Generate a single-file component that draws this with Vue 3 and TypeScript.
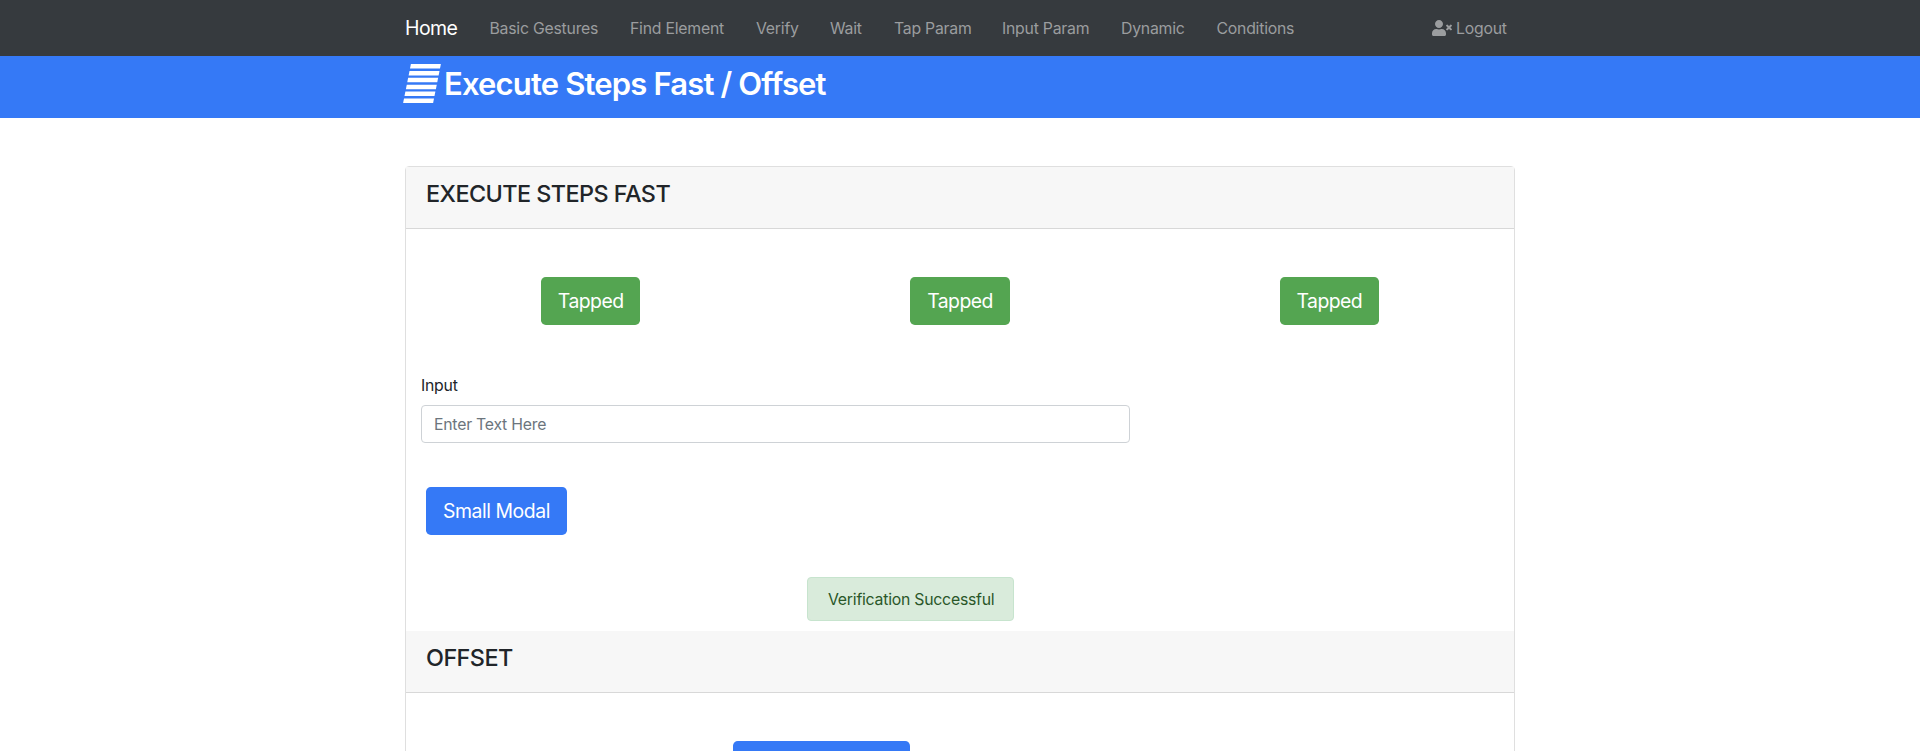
<script setup lang="ts">
interface NavItem {
  label: string
  slug: string
}

const navItems: NavItem[] = [
  { label: 'Basic Gestures', slug: 'gestures' },
  { label: 'Find Element', slug: 'find' },
  { label: 'Verify', slug: 'verify' },
  { label: 'Wait', slug: 'wait' },
  { label: 'Tap Param', slug: 'tap' },
  { label: 'Input Param', slug: 'input' },
  { label: 'Dynamic', slug: 'dynamic' },
  { label: 'Conditions', slug: 'conditions' },
]

const stripes: number[] = [0, 1, 2, 3, 4, 5]
const tapButtons: string[] = ['Tapped', 'Tapped', 'Tapped']

function stripePoints(index: number): string {
  const top = index * 6.88
  const bottom = top + 4.5
  const left = (y: number): number => 7.9 - y * 0.2
  return [
    `${left(top)},${top}`,
    `${left(top) + 30},${top}`,
    `${left(bottom) + 30},${bottom}`,
    `${left(bottom)},${bottom}`,
  ].join(' ')
}
</script>

<template>
  <div class="page">
    <nav class="navbar">
      <div class="container nav-row">
        <a class="brand">Home</a>
        <a v-for="item in navItems" :key="item.slug" class="nav-link" :class="item.slug">{{ item.label }}</a>
        <a class="logout">
          <svg class="user-icon" viewBox="0 0 640 512" aria-hidden="true">
            <path d="M589.6 240l45.6-45.6c6.3-6.3 6.3-16.5 0-22.8l-22.8-22.8c-6.3-6.3-16.5-6.3-22.8 0L544 194.4l-45.6-45.6c-6.3-6.3-16.5-6.3-22.8 0l-22.8 22.8c-6.3 6.3-6.3 16.5 0 22.8l45.6 45.6-45.6 45.6c-6.3 6.3-6.3 16.5 0 22.8l22.8 22.8c6.3 6.3 16.5 6.3 22.8 0l45.6-45.6 45.6 45.6c6.3 6.3 16.5 6.3 22.8 0l22.8-22.8c6.3-6.3 6.3-16.5 0-22.8L589.6 240zM224 256c70.7 0 128-57.3 128-128S294.7 0 224 0 96 57.3 96 128s57.3 128 128 128zm89.6 32h-16.7c-22.2 10.2-46.9 16-72.9 16s-50.6-5.8-72.9-16h-16.7C60.2 288 0 348.2 0 422.4V464c0 26.5 21.5 48 48 48h352c26.5 0 48-21.5 48-48v-41.6c0-74.2-60.2-134.4-134.4-134.4z" />
          </svg>
          <span class="logout-text">Logout</span>
        </a>
      </div>
    </nav>

    <header class="banner">
      <div class="container banner-row">
        <svg class="stripes" viewBox="0 0 38 39" aria-hidden="true">
          <polygon v-for="i in stripes" :key="i" :points="stripePoints(i)" />
        </svg>
        <h1>Execute Steps Fast / Offset</h1>
      </div>
    </header>

    <main class="container card">
      <div class="card-header"><h4>EXECUTE STEPS FAST</h4></div>
      <section class="card-body">
        <div class="tap-row">
          <div v-for="(label, i) in tapButtons" :key="i" class="tap-cell">
            <button class="btn success" type="button">{{ label }}</button>
          </div>
        </div>
        <div class="field">
          <label for="text-input">Input</label>
          <input id="text-input" type="text" placeholder="Enter Text Here" />
        </div>
        <button class="btn primary modal-btn" type="button">Small Modal</button>
        <div class="alert">Verification Successful</div>
      </section>
      <div class="card-header"><h4>OFFSET</h4></div>
      <section class="offset-body">
        <button class="btn primary offset-btn" type="button"></button>
      </section>
    </main>
  </div>
</template>

<style>
html,
body {
  margin: 0;
  overflow: hidden;
}
</style>

<style scoped>
.page,
.page * {
  box-sizing: border-box;
}
.page {
  height: 751px;
  overflow: hidden;
  background: #fff;
  color: #212529;
  font: 400 15.8px/24px Inter, sans-serif;
  letter-spacing: -0.23px;
}
.container {
  width: 1110px;
  margin: 0 auto;
}
.navbar {
  height: 56px;
  background: #363a3e;
}
.nav-row {
  display: flex;
  align-items: center;
  height: 56px;
  white-space: nowrap;
}
.brand {
  width: 68.5px;
  color: #fff;
  font-size: 19.5px;
  letter-spacing: -0.55px;
}
.nav-link,
.logout {
  color: #9b9d9f;
}
.nav-link {
  padding: 1px 0 0 16px;
}
.gestures { width: 140.5px; }
.find { width: 126px; }
.verify { width: 74px; }
.wait { width: 64px; }
.tap { width: 108px; }
.input { width: 119px; }
.dynamic { width: 95.5px; }
.logout {
  display: flex;
  align-items: center;
  gap: 4px;
  margin-left: auto;
  width: 83px;
}
.logout-text {
  padding-top: 1px;
}
.user-icon {
  width: 20px;
  height: 16px;
  fill: currentColor;
}
.banner {
  height: 62px;
  background: #3579f6;
}
.banner-row {
  display: flex;
  padding-top: 8px;
}
.stripes {
  width: 38px;
  height: 39px;
  margin-left: -2px;
  fill: #fff;
}
h1 {
  margin: 0 0 0 3px;
  color: #fff;
  font-size: 31px;
  font-weight: 600;
  line-height: 40px;
  letter-spacing: -0.84px;
  white-space: nowrap;
}
.card {
  height: 700px;
  margin-top: 48px;
  border: 1px solid #dfdfdf;
  border-radius: 4px;
}
.card-header {
  height: 62px;
  padding: 12px 20px;
  background: #f7f7f7;
  border-bottom: 1px solid #d8d8d8;
}
h4 {
  margin: 0;
  font-size: 23.4px;
  font-weight: 500;
  line-height: 29px;
  letter-spacing: -0.55px;
}
.card-body {
  display: flex;
  flex-direction: column;
  align-items: flex-start;
  height: 402px;
  padding-top: 48px;
}
.tap-row {
  display: grid;
  grid-template-columns: repeat(3, 1fr);
  width: 1108px;
}
.tap-cell {
  display: flex;
  justify-content: center;
}
.btn {
  height: 48px;
  padding: 0;
  border: 0;
  border-radius: 4.8px;
  color: #fff;
  font: 400 19.4px/48px Inter, sans-serif;
  white-space: nowrap;
}
.success {
  width: 99.3px;
  background: #54a551;
  letter-spacing: -0.55px;
}
.primary {
  background: #3579f6;
}
.field {
  display: flex;
  flex-direction: column;
  margin: 48px 0 0 15px;
}
label {
  padding-top: 1px;
  margin-bottom: 7px;
}
input {
  width: 709px;
  height: 38px;
  padding: 6px 12px;
  border: 1px solid #ced2d6;
  border-radius: 4px;
  background: #fff;
  font: inherit;
  letter-spacing: inherit;
}
input::placeholder {
  color: #6c757d;
  opacity: 1;
}
.modal-btn {
  width: 141px;
  margin: 44px 0 0 20px;
  letter-spacing: -0.45px;
}
.alert {
  width: 207px;
  height: 44px;
  margin: 42px 0 0 401px;
  padding: 10px 20px;
  border: 1px solid #c7e4ce;
  border-radius: 4px;
  background: #d9ebdb;
  color: #2a5729;
  white-space: nowrap;
}
.offset-body {
  padding: 48px 0 0 327px;
}
.offset-btn {
  width: 177px;
}
</style>
